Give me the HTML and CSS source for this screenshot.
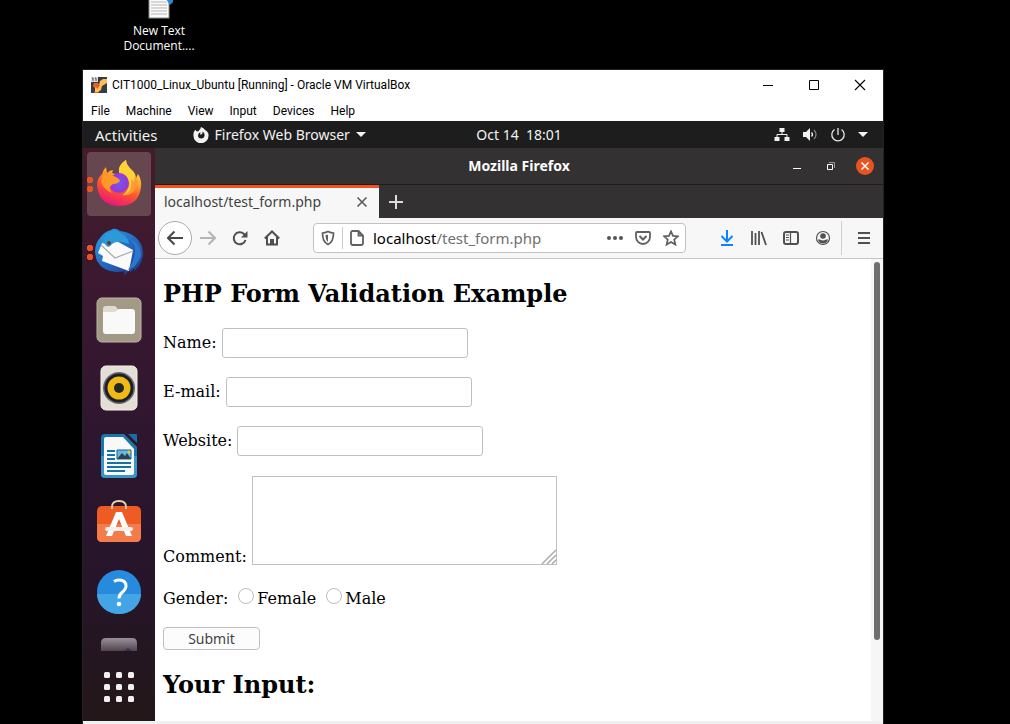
FILE: index.html
```html
<!DOCTYPE html>
<html lang="en">
<head>
<meta charset="utf-8">
<title>CIT1000_Linux_Ubuntu</title>
<link rel="stylesheet" href="styles.css">
</head>
<body>
<div class="desktop-file">
  <svg width="28" height="20" viewBox="0 0 28 20"><rect x="4" y="-3" width="20" height="21" fill="#fafafa" stroke="#888"/><path d="M6 2h16M6 5h16M6 8h16M6 11h16M6 14h16" stroke="#b5b5b5"/><path d="M21-1h7v3l-3 3z" fill="#2b88d8"/></svg>
  <span>New Text<br>Document....</span>
</div>

<main class="vm">
  <header class="vm-title">
    <svg width="16" height="16" viewBox="0 0 16 16"><rect width="16" height="16" fill="#353b48"/><path d="M3 6h4l3 5-3 5H3l2-4-3-3z" fill="#f26a21"/><path d="M16 2h-4L9 4 8 8l-4 3v4h3l3-2 1-4 5-3z" fill="#ffbe55"/><path d="M4 7l5 1-3 4z" fill="#e8581a"/><path d="M0 0h7v5H0z" fill="#ddd"/><path d="M1 1h1v3M4 1h1v3" stroke="#555" fill="none"/></svg>
    <h1>CIT1000_Linux_Ubuntu [Running] - Oracle VM VirtualBox</h1>
    <div class="vm-controls">
      <button aria-label="Minimize"><svg width="12" height="12" viewBox="0 0 12 12"><path d="M1 6.500h10" stroke="#000"/></svg></button>
      <button aria-label="Maximize"><svg width="12" height="12" viewBox="0 0 12 12"><path d="M1.500 1.500h9v9h-9z" fill="none" stroke="#000"/></svg></button>
      <button aria-label="Close"><svg width="12" height="12" viewBox="0 0 12 12"><path d="M1 1l10 10M11 1L1 11" stroke="#000" stroke-width="1.100"/></svg></button>
    </div>
  </header>
  <nav class="vm-menu"><button>File</button><button>Machine</button><button>View</button><button>Input</button><button>Devices</button><button>Help</button></nav>

  <div class="topbar">
    <div class="topbar-left">
      <button class="activities">Activities</button>
      <button class="app-menu">
        <svg width="16" height="16" viewBox="0 0 16 16"><path d="M5 4.500Q8 2 8 0Q11 1 12 3Q16 5 15.500 9A7.500 7.200 0 0 1 .500 9Q0 5 2.500 2.500L3 4zM7.500 5Q5 6 5 8.500A3.300 3.300 0 0 0 11.500 9Q12 6 9.500 4.500Q10 8 7 7.500z" fill="#f2f2f2" fill-rule="evenodd"/></svg>
        <span>Firefox Web Browser</span>
        <svg width="10" height="6" viewBox="0 0 10 6"><path d="M0 0h10L5 5z" fill="#f2f2f2"/></svg>
      </button>
    </div>
    <button class="clock">Oct 14 &nbsp;18:01</button>
    <button class="tray" aria-label="System menu">
      <svg width="16" height="16" viewBox="0 0 16 16"><path d="M5.500 1h5v4h-5zM0.500 10h5v4h-5zM10.500 10h5v4h-5z" fill="#f2f2f2"/><path d="M8 5v3M3 10V7.500h10V10" fill="none" stroke="#f2f2f2"/></svg>
      <svg width="16" height="16" viewBox="0 0 16 16"><path d="M1 5h3l4-4v13l-4-4H1z" fill="#f2f2f2"/><path d="M9.500 5.500q2 2 0 4" fill="none" stroke="#f2f2f2" stroke-width="1.300"/><path d="M12 3q4 4.500 0 9" fill="none" stroke="#888" stroke-width="1.200"/></svg>
      <svg width="16" height="16" viewBox="0 0 16 16"><path d="M8 1v7M4.500 2.500a6.200 6.200 0 1 0 7 0" fill="none" stroke="#e6e6e6" stroke-width="1.300"/></svg>
      <svg width="10" height="6" viewBox="0 0 10 6"><path d="M0 0h10L5 5z" fill="#f2f2f2"/></svg>
    </button>
  </div>

  <div class="workspace">
    <nav class="dock" aria-label="Dock">
      <button class="active running" aria-label="Firefox"><svg width="64" height="64" viewBox="0 0 64 64">
        <defs><linearGradient id="ff" x1=".75" y1="0" x2=".35" y2="1"><stop offset="0" stop-color="#fff04a"/><stop offset=".35" stop-color="#ffb02a"/><stop offset=".65" stop-color="#ff542f"/><stop offset="1" stop-color="#e9157c"/></linearGradient><radialGradient id="gl"><stop offset="0" stop-color="#6c5bea"/><stop offset="1" stop-color="#9a35d6"/></radialGradient></defs>
        <path d="M19 15L20 21Q23 18 26 18L25 21Q30 22 32 24L32 17Q34 11 39 8Q39 13 46 19Q49 22 49 26L51 22Q55 28 54 35Q52 54 32 54Q12 53 10 34Q10 26 15 22Q16 18 19 15Z" fill="url(#ff)"/>
        <circle cx="32" cy="31" r="10" fill="url(#gl)"/>
        <path d="M16 23Q22 21 27 24L32 27L33 29Q31 32 26 32Q20 35 25 41Q17 38 14 30Z" fill="#ff9829"/>
        <path d="M32 20Q31 13 39 8Q39 14 46 20Q52 29 47 38Q43 44 36 43Q44 36 42 29Q40 21 32 20Z" fill="#ffd338"/>
        <path d="M44 27Q46 40 36 43Q45 44 49 36Q52 29 48 23L47 30Z" fill="#ff9b30"/>
      </svg></button>
      <button class="running" aria-label="Thunderbird"><svg width="64" height="64" viewBox="0 0 64 64">
        <defs><linearGradient id="tb" x2=".8" y2="1"><stop offset="0" stop-color="#2aa5e8"/><stop offset=".5" stop-color="#2570c6"/><stop offset="1" stop-color="#1d3f96"/></linearGradient></defs>
        <path d="M24 10Q28 7 33 11Q50 13 55 27Q58 38 51 47L47 51L47 48L43 53L43 50L37 55L38 51Q18 55 10 41Q5 27 13 18Q18 11 24 10Z" fill="url(#tb)"/><path d="M15 23L11 33L16 36L15 41L42 51L46 30L22 17Z" fill="#fafafa"/><path d="M14 25L28 38L46 31" fill="none" stroke="#aaa" stroke-width="1.200"/><path d="M15 23Q18 11 28 10Q42 16 42 24Q31 19 25 24Q21 30 18 24" fill="#2c9ad8"/><path d="M38 17Q54 23 45 43Q43 47 41 50Q49 48 54 36Q54 21 38 17Z" fill="#2a78c9"/><circle cx="22" cy="23" r="2" fill="#603f34"/>
      </svg></button>
      <button aria-label="Files"><svg width="64" height="64" viewBox="0 0 64 64"><rect x="10" y="10" width="44" height="44" rx="5" fill="#a29a86" stroke="#bdb6a6"/><path d="M16 21q0-3 3-3h9l3 3v6H16z" fill="#dedbd1"/><path d="M16 24h12l4-3h13q3 0 3 3v19q0 3-3 3H19q-3 0-3-3z" fill="#f9f9f7"/></svg></button>
      <button aria-label="Rhythmbox"><svg width="64" height="64" viewBox="0 0 64 64"><rect x="14" y="10" width="36" height="44" rx="5" fill="#e3dfd6" stroke="#f3f0e9"/><circle cx="32" cy="32" r="16" fill="#6c6b70"/><circle cx="32" cy="32" r="14.500" fill="#1d1e2c"/><circle cx="32" cy="32" r="11.500" fill="#f0b914"/><circle cx="32" cy="32" r="5" fill="#252525"/></svg></button>
      <button aria-label="LibreOffice Writer"><svg width="64" height="64" viewBox="0 0 64 64"><path d="M18 10h19l13 13v27q0 4-4 4H18q-4 0-4-4V14q0-4 4-4z" fill="#1877ae"/><path d="M14 32h36v18q0 4-4 4H18q-4 0-4-4z" fill="#3795c8"/><path d="M41 10h8q1 0 1 1v8z" fill="#176f9f"/><path d="M19 13h17l11 12v24q0 2-2 2H19q-2 0-2-2V15q0-2 2-2z" fill="#f9f9f9"/><path d="M20 27h8M20 31h8M20 35h8M20 39h24M20 43h24M20 47h18" stroke="#1671a4" stroke-width="2"/><path d="M30 26h14v9H30z" fill="#65b8e9" stroke="#17628d"/><path d="M30 35l5-6 3 3 2-3 4 6z" fill="#30424e"/><circle cx="42" cy="28" r="1.500" fill="#f8c630"/></svg></button>
      <button aria-label="Ubuntu Software"><svg width="64" height="64" viewBox="0 0 64 64"><rect x="10" y="14" width="44" height="36" rx="5" fill="#ef5b25"/><path d="M10 32h44v13q0 5-5 5H15q-5 0-5-5z" fill="#f47c4b"/><path d="M25 17v-2q0-6 7-6t7 6v2" fill="none" stroke="#ead5ac" stroke-width="1.800"/><path d="M29 20h6l10 24h-6l-7-17-7 17h-6z" fill="#fff"/><path d="M20 35h24q2 0 2 2t-2 2H20q-2 0-2-2t2-2z" fill="#f4f0ee"/></svg></button>
      <button aria-label="Help"><svg width="64" height="64" viewBox="0 0 64 64"><circle cx="32" cy="32" r="22" fill="#268bdc"/><path d="M10 34h44a22 20 0 0 1-44 0z" fill="#43a5e5"/><path d="M27 21.500q2-1.500 5-1.500 7 0 7 6 0 3-4 6.500-3 2.500-3 6" fill="none" stroke="#fff" stroke-width="3"/><circle cx="32" cy="44" r="2.300" fill="#fff"/></svg></button>
      <button class="peek" aria-label="Next application"><svg width="64" height="24" viewBox="0 0 64 24"><defs><linearGradient id="pk" x2="0" y2="1"><stop offset="0" stop-color="#989198"/><stop offset="1" stop-color="#51434f"/></linearGradient></defs><path d="M14 23v-8q0-5 5-5h26q5 0 5 5v8z" fill="url(#pk)"/><path d="M37 23l4-3 4 3z" fill="#30305f"/></svg></button>
      <button aria-label="Show Applications"><svg width="64" height="64" viewBox="0 0 64 64" fill="#f2f0ee"><rect x="17" y="16" width="6" height="6" rx="1.500"/><rect x="29" y="16" width="6" height="6" rx="1.500"/><rect x="41" y="16" width="6" height="6" rx="1.500"/><rect x="17" y="28" width="6" height="6" rx="1.500"/><rect x="29" y="28" width="6" height="6" rx="1.500"/><rect x="41" y="28" width="6" height="6" rx="1.500"/><rect x="17" y="40" width="6" height="6" rx="1.500"/><rect x="29" y="40" width="6" height="6" rx="1.500"/><rect x="41" y="40" width="6" height="6" rx="1.500"/></svg></button>
    </nav>

    <section class="browser">
      <header class="browser-title">
        <h2>Mozilla Firefox</h2>
        <div class="browser-controls">
          <button aria-label="Minimize"><svg width="10" height="10" viewBox="0 0 10 10"><path d="M1 7.500h8" stroke="#fff"/></svg></button>
          <button aria-label="Restore"><svg width="10" height="10" viewBox="0 0 10 10"><path d="M1.500 3.500h5v5h-5z" fill="none" stroke="#fff"/><path d="M3 1.500h5.500V7" fill="none" stroke="#999"/></svg></button>
          <button class="close" aria-label="Close"><svg width="10" height="10" viewBox="0 0 10 10"><path d="M1.500 1.500l7 7M8.500 1.500l-7 7" stroke="#fff" stroke-width="1.500"/></svg></button>
        </div>
      </header>
      <div class="tabs">
        <div class="tab"><span>localhost/test_form.php</span><button aria-label="Close tab"><svg width="12" height="12" viewBox="0 0 12 12"><path d="M1.500 1.500l9 9M10.500 1.500l-9 9" stroke="#555" stroke-width="1.500"/></svg></button></div>
        <button class="new-tab" aria-label="New tab"><svg width="14" height="14" viewBox="0 0 14 14"><path d="M7 0v14M0 7h14" stroke="#ddd" stroke-width="2"/></svg></button>
      </div>
      <div class="toolbar">
        <button class="back" aria-label="Back"><svg width="16" height="16" viewBox="0 0 16 16"><path d="M16 8H1M7.500 1.500L1 8l6.500 6.500" fill="none" stroke="#484848" stroke-width="2"/></svg></button>
        <button aria-label="Forward"><svg width="16" height="16" viewBox="0 0 16 16"><path d="M0 8h15M8.500 1.500L15 8l-6.500 6.500" fill="none" stroke="#b5b5b5" stroke-width="2"/></svg></button>
        <button aria-label="Reload"><svg width="16" height="16" viewBox="0 0 16 16"><path d="M13.500 10A6 6 0 1 1 12 4l1.500 1.500" fill="none" stroke="#505050" stroke-width="2"/><path d="M15.500 1v6.500H9z" fill="#505050"/></svg></button>
        <button aria-label="Home"><svg width="16" height="16" viewBox="0 0 16 16"><path d="M.800 8.500L8 1.500l7.200 7M3 7v7.500h10V7" fill="none" stroke="#505050" stroke-width="2"/><path d="M6 9h4v6H6z" fill="#505050"/></svg></button>
        <div class="address">
          <svg width="16" height="16" viewBox="0 0 16 16"><path d="M8 1.500q3 1.500 5.500 1.500 0 9-5.500 11.500Q2.500 12 2.500 3 5 3 8 1.500z" fill="none" stroke="#606060" stroke-width="1.700"/><path d="M8 4.500q-1.500.500-2.500.500 0 5 2.500 7z" fill="#606060"/></svg>
          <span class="divider"></span>
          <svg width="16" height="16" viewBox="0 0 16 16"><path d="M3.500 1h6L14 5.500V13q0 2-2 2H4q-2 0-2-2V3q0-2 1.500-2zM9.500 1v4.500H14" fill="none" stroke="#606060" stroke-width="1.800"/></svg>
          <div class="url"><strong>localhost</strong>/test_form.php</div>
          <button aria-label="Page actions"><svg width="16" height="16" viewBox="0 0 16 16" fill="#555"><circle cx="2" cy="8" r="2"/><circle cx="8" cy="8" r="2"/><circle cx="14" cy="8" r="2"/></svg></button>
          <button aria-label="Save to Pocket"><svg width="16" height="16" viewBox="0 0 16 16"><path d="M2 2h12q1 0 1 1v4a7 7 0 0 1-14 0V3q0-1 1-1z" fill="none" stroke="#606060" stroke-width="1.800"/><path d="M4.500 6L8 9.500 11.500 6" fill="none" stroke="#606060" stroke-width="2"/></svg></button>
          <button aria-label="Bookmark"><svg width="16" height="16" viewBox="0 0 16 16"><path d="M8 1.300l2 4.600 5 .400-3.800 3.300 1.200 5L8 12l-4.400 2.600 1.200-5L1 6.300l5-.400z" fill="none" stroke="#606060" stroke-width="1.700"/></svg></button>
        </div>
        <div class="tools">
          <button aria-label="Downloads"><svg width="16" height="16" viewBox="0 0 16 16"><path d="M8 0v11M2.500 6L8 11.500 13.500 6M2 15h12" fill="none" stroke="#0a84ff" stroke-width="2"/></svg></button>
          <button aria-label="Library"><svg width="16" height="16" viewBox="0 0 16 16"><path d="M1 1v14M4.500 3v12M8 1v14M10.500 2l4.500 13" fill="none" stroke="#505050" stroke-width="1.800"/></svg></button>
          <button aria-label="Sidebars"><svg width="16" height="16" viewBox="0 0 16 16"><rect x="1" y="2" width="14" height="12" rx="2" fill="none" stroke="#505050" stroke-width="2"/><path d="M7.500 2v12M3 5h3M3 7.500h3M3 10h3" stroke="#505050" stroke-width="1.200"/></svg></button>
          <button aria-label="Account"><svg width="16" height="16" viewBox="0 0 16 16"><circle cx="8" cy="8" r="6.500" fill="none" stroke="#505050" stroke-width="1.200"/><circle cx="8" cy="6" r="2.800" fill="#505050"/><path d="M3 9.500h2q3 2 6 0h2q-1 4-5 4t-5-4z" fill="#505050"/></svg></button>
          <button class="hamburger" aria-label="Menu"><svg width="14" height="14" viewBox="0 0 14 14"><path d="M1 2h12M1 7h12M1 12h12" stroke="#505050" stroke-width="2"/></svg></button>
        </div>
      </div>
      <div class="viewport">
        <article class="page">
          <h2>PHP Form Validation Example</h2>
          <form>
            <div class="row"><label for="name">Name:</label><input id="name" type="text"></div>
            <div class="row"><label for="email">E-mail:</label><input id="email" type="text"></div>
            <div class="row"><label for="website">Website:</label><input id="website" type="text"></div>
            <div class="row comment"><label for="comment">Comment:</label><div class="area"><textarea id="comment"></textarea><svg class="grip" width="16" height="16" viewBox="0 0 16 16"><path d="M1 15L15 1M6 15l9-9M11 15l4-4" stroke="#aaa" stroke-width="1.500"/></svg></div></div>
            <div class="row gender"><span>Gender:</span><label><input type="radio" name="gender">Female</label><label><input type="radio" name="gender">Male</label></div>
            <button class="submit" type="button">Submit</button>
          </form>
          <h2>Your Input:</h2>
        </article>
        <div class="scrollbar"><div class="thumb"></div></div>
      </div>
    </section>
  </div>
  <div class="vm-status"></div>
</main>
</body>
</html>
```
FILE: styles.css
```css
* { box-sizing: border-box; }
body { margin: 0; min-height: 100vh; background: #000; display: flex; flex-direction: column; overflow: hidden; }
button { border: 0; padding: 0; background: none; font: inherit; color: inherit; display: flex; align-items: center; justify-content: center; }
svg { display: block; flex: none; }
h1, h2 { margin: 0; }

.desktop-file { height: 69px; width: 100px; margin-left: 109px; display: flex; flex-direction: column; align-items: center; gap: 3px; color: #fff; font: 12px/15px "Open Sans", sans-serif; text-align: center; }

.vm { flex: 1; margin: 0 126px 0 82px; display: flex; flex-direction: column; border: 1px solid #222; border-bottom: 0; background: #fff; font: 12px/16px Roboto, sans-serif; color: #000; }
.vm-title { height: 30px; padding-left: 8px; display: flex; align-items: center; gap: 5px; }
.vm-title h1 { font: 12px/16px Roboto, sans-serif; flex: 1; }
.vm-controls { display: flex; }
.vm-controls button { width: 46px; height: 30px; }
.vm-menu { height: 21px; padding-left: 8px; display: flex; gap: 16px; }

.topbar { height: 27px; padding: 0 15px 0 12px; background: #1d1d1d; color: #f2f2f2; display: grid; grid-template-columns: 1fr auto 1fr; align-items: center; font: 14px/20px "Noto Sans", sans-serif; }
.topbar-left { display: flex; gap: 35px; }
.activities { font-size: 15px; }
.app-menu { gap: 6px; }
.app-menu span { white-space: nowrap; }
.clock { padding-left: 75px; }
.tray { justify-self: end; gap: 12px; }

.workspace { flex: 1; display: flex; }
.dock { width: 72px; padding: 4px 4px 0; display: flex; flex-direction: column; gap: 4px; background: linear-gradient(#451c29, #3d1930 20%, #2e162f 50%, #26152a 75%, #231719); }
.dock button { height: 64px; border-radius: 4px; }
.dock .active { background: #67474f; }
.dock .running { background-image: radial-gradient(circle, #e95420 2px, #e95420 3px, transparent 3px), radial-gradient(circle, #e95420 2px, #e95420 3px, transparent 3px); background-size: 6px 6px; background-position: 0 25px, 0 34px; background-repeat: no-repeat; }
.dock .peek { height: 24px; }

.browser { flex: 1; min-width: 0; display: flex; flex-direction: column; background: #fff; }
.browser-title { height: 37px; background: #333132; border-bottom: 1px solid #1d1d1d; color: #fff; display: grid; grid-template-columns: 1fr auto 1fr; align-items: center; }
.browser-title h2 { grid-column: 2; font: bold 14px/20px "Noto Sans", sans-serif; }
.browser-controls { display: flex; justify-self: end; align-items: center; gap: 16px; padding-right: 9px; }
.browser-controls button { width: 18px; height: 18px; }
.browser-controls .close { background: #e95420; border-radius: 50%; }
.tabs { height: 33px; background: #333132; display: flex; }
.tab { width: 224px; padding: 0 11px 2px 9px; border-top: 3px solid #f0541e; background: #f7f7f7; display: flex; align-items: center; justify-content: space-between; color: #424242; font: 14px/20px "Noto Sans", sans-serif; }
.new-tab { width: 34px; }
.toolbar { height: 41px; padding: 0 12px 0 3px; background: #f7f7f7; border-bottom: 1px solid #c4c4c4; display: flex; align-items: center; gap: 16px; }
.toolbar .back { width: 34px; height: 34px; margin-right: -8px; border: 1px solid #ababab; border-radius: 50%; background: #fff; }
.address { flex: 1; height: 30px; margin-left: 17px; padding: 0 6px; border: 1px solid #c2c2c2; border-radius: 4px; background: #fff; display: flex; align-items: center; gap: 12px; }
.address .divider { width: 1px; height: 22px; margin: 0 -6px; background: #ccc; }
.address .url { flex: 1; margin-left: -4px; color: #707070; font: 15px/20px "Noto Sans", sans-serif; white-space: nowrap; }
.address strong { font-weight: normal; color: #000; }
.tools { display: flex; align-items: center; gap: 16px; margin-left: 17px; }
.hamburger { height: 34px; margin-left: -6px; padding-left: 15px; border-left: 1px solid #d0d0d0; }

.viewport { flex: 1; display: flex; }
.page { flex: 1; padding: 21px 8px 0; font: 16px/19px "DejaVu Serif", serif; }
.page h2 { font: bold 24px/28px "DejaVu Serif", serif; }
.page form { margin: 20px 0 21px; display: flex; flex-direction: column; align-items: flex-start; gap: 19px; }
.row { display: flex; align-items: center; gap: 5px; }
.row > label { padding-bottom: 2px; }
.row input[type="text"] { width: 246px; height: 30px; padding: 4px 8px; border: 1px solid #c0c0c0; border-radius: 3px; background: #fff; }
.row.comment { align-items: flex-end; padding-top: 1px; }
.row.comment > label { padding: 0; line-height: 17px; }
.area { position: relative; }
.area textarea { display: block; width: 305px; height: 89px; border: 1px solid #c0c0c0; resize: none; }
.grip { position: absolute; right: 0; bottom: 0; pointer-events: none; }
.gender { height: 24px; padding-top: 4px; gap: 10px; }
.gender > label { display: flex; align-items: center; gap: 3px; padding: 0; }
.gender input { appearance: none; width: 16px; height: 16px; margin: 0 0 4px; border: 1px solid #bdbdbd; border-radius: 50%; background: #fff; }
.submit { width: 97px; height: 23px; border: 1px solid #c0c0c0; border-radius: 4px; background: #fcfcfc; color: #444; font: 14px/20px "Noto Sans", sans-serif; }
.scrollbar { width: 12px; padding: 3px 3px 0; background: #f6f6f6; }
.thumb { width: 6px; height: 378px; border-radius: 3px; background: #6e6e6e; }
.vm-status { height: 3px; background: #f0f0f0; }
```
